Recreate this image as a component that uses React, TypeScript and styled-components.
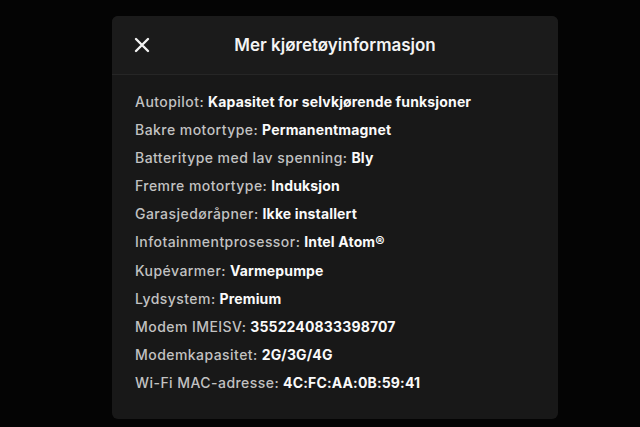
import styled, { createGlobalStyle } from 'styled-components';

const GlobalStyle = createGlobalStyle`
  html, body {
    margin: 0;
    padding: 0;
    background: #040404;
  }
  body {
    font-family: Inter, "Noto Sans", sans-serif;
    -webkit-font-smoothing: antialiased;
  }
`;

const rows: [string, string][] = [
  ['Autopilot', 'Kapasitet for selvkjørende funksjoner'],
  ['Bakre motortype', 'Permanentmagnet'],
  ['Batteritype med lav spenning', 'Bly'],
  ['Fremre motortype', 'Induksjon'],
  ['Garasjedøråpner', 'Ikke installert'],
  ['Infotainmentprosessor', 'Intel Atom®'],
  ['Kupévarmer', 'Varmepumpe'],
  ['Lydsystem', 'Premium'],
  ['Modem IMEISV', '3552240833398707'],
  ['Modemkapasitet', '2G/3G/4G'],
  ['Wi-Fi MAC-adresse', '4C:FC:AA:0B:59:41'],
];

export default function App() {
  return (
    <Screen>
      <GlobalStyle />
      <Panel>
        <Header>
          <CloseButton aria-label='Lukk'>
            <svg width='16' height='16' viewBox='0 0 16 16'>
              <path d='M2 2L14 14M14 2L2 14' stroke='#f2f2f2' strokeWidth='2.4' strokeLinecap='round' />
            </svg>
          </CloseButton>
          <Title>Mer kjøretøyinformasjon</Title>
        </Header>
        <InfoList>
          {rows.map(([label, value]) => (
            <InfoRow key={label}>
              <Label>{label}:</Label> <Value>{value}</Value>
            </InfoRow>
          ))}
        </InfoList>
      </Panel>
    </Screen>
  );
}

const Screen = styled.div`
  width: 640px;
  height: 427px;
  box-sizing: border-box;
  padding: 16px 0 0 112px;
  overflow: hidden;
`;
const Panel = styled.section`
  width: 446px;
  height: 403px;
  background: #181818;
  border-radius: 6px;
  overflow: hidden;
  display: flex;
  flex-direction: column;
`;
const Header = styled.header`
  height: 58px;
  flex-shrink: 0;
  display: grid;
  grid-template-columns: 60px 1fr 60px;
  align-items: center;
  background: #1b1b1b;
  border-bottom: 1px solid #262626;
`;
const CloseButton = styled.button`
  background: none;
  border: none;
  padding: 0;
  margin-left: 22px;
  width: 16px;
  height: 16px;
  display: flex;
  cursor: pointer;
`;
const Title = styled.h1`
  margin: 0;
  text-align: center;
  color: #f4f4f4;
  font-size: 17px;
  font-weight: 600;
`;
const InfoList = styled.div`
  padding: 17px 0 0 23px;
  display: flex;
  flex-direction: column;
`;
const InfoRow = styled.div`
  height: 28.1px;
  line-height: 20px;
  font-size: 14px;
  white-space: nowrap;
`;
const Label = styled.span`
  color: #c2c2c2;
  font-weight: 500;
  letter-spacing: 0.45px;
`;
const Value = styled.span`
  color: #fafafa;
  font-weight: 700;
  letter-spacing: 0.15px;
`;
